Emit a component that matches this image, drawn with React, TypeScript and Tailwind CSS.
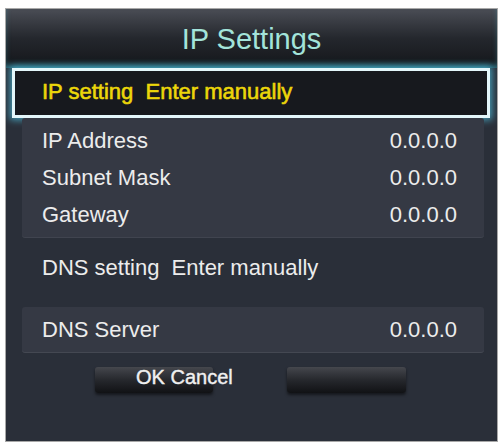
import React from "react";

const font = { fontFamily: '"Liberation Sans", Arial, sans-serif' };

function Row({ label, value }: { label: string; value: string }) {
  return (
    <div className="flex justify-between h-[37px] leading-[37px] text-[22px] text-[#ececec]">
      <span>{label}</span>
      <span>{value}</span>
    </div>
  );
}

export default function App() {
  return (
    <div className="w-[504px] h-[448px] bg-white pt-[8px] pl-[5px]" style={font}>
      <div className="w-[493px] h-[434px] border border-[#a8a8a8] bg-[#2a2f39] flex flex-col overflow-hidden">
        {/* header */}
        <div className="h-[59px] shrink-0 bg-gradient-to-b from-[#4a4d55] via-[#24272d] to-[#14161a] flex items-center justify-center pt-[2px] shadow-[inset_0_-4px_6px_-2px_rgba(70,190,215,0.55)]">
          <span className="text-[29px] text-[#a3e4da] leading-none">IP Settings</span>
        </div>
        {/* selected row */}
        <div className="ml-[6px] w-[478px] h-[50px] shrink-0 border-[3px] border-[#e4f7fb] bg-[#17191e] shadow-[0_0_7px_2px_rgba(80,195,225,0.75)] pl-[27px] pt-[2px]">
          <span className="text-[22px] leading-[37px] text-[#ecd60a] whitespace-pre [-webkit-text-stroke:0.6px_#ecd60a]">IP setting  Enter manually</span>
        </div>
        {/* group */}
        <div className="ml-[16px] w-[462px] mt-0 rounded-[3px] bg-[#353944] pl-[20px] pr-[27px] pt-[4px] pb-[5px] shadow-[inset_0_-1px_0_rgba(255,255,255,0.06)]">
          <Row label="IP Address" value="0.0.0.0" />
          <Row label="Subnet Mask" value="0.0.0.0" />
          <Row label="Gateway" value="0.0.0.0" />
        </div>
        {/* DNS setting */}
        <div className="ml-[36px] mt-[11px] h-[37px] leading-[37px] text-[22px] text-[#ececec] whitespace-pre">
          DNS setting  Enter manually
        </div>
        {/* DNS server */}
        <div className="ml-[16px] w-[462px] mt-[21px] h-[46px] rounded-[3px] bg-[#353944] pl-[20px] pr-[27px] flex justify-between leading-[46px] text-[22px] text-[#ececec] shadow-[inset_0_-1px_0_rgba(255,255,255,0.08)]">
          <span>DNS Server</span>
          <span>0.0.0.0</span>
        </div>
        {/* buttons */}
        <div className="mt-[14px] ml-[89px] flex gap-[74px]">
          <div className="w-[118px] h-[26px] rounded-[3px] bg-gradient-to-b from-[#45474d] via-[#26282d] to-[#111215] shadow-[0_2px_3px_rgba(0,0,0,0.5)] pl-[41px]">
            <span className="text-[20px] leading-[21px] text-[#f0f0f0] whitespace-nowrap [-webkit-text-stroke:0.4px_#f0f0f0]">OK Cancel</span>
          </div>
          <div className="w-[119px] h-[26px] rounded-[3px] bg-gradient-to-b from-[#45474d] via-[#26282d] to-[#111215] shadow-[0_2px_3px_rgba(0,0,0,0.5)]" />
        </div>
      </div>
    </div>
  );
}
